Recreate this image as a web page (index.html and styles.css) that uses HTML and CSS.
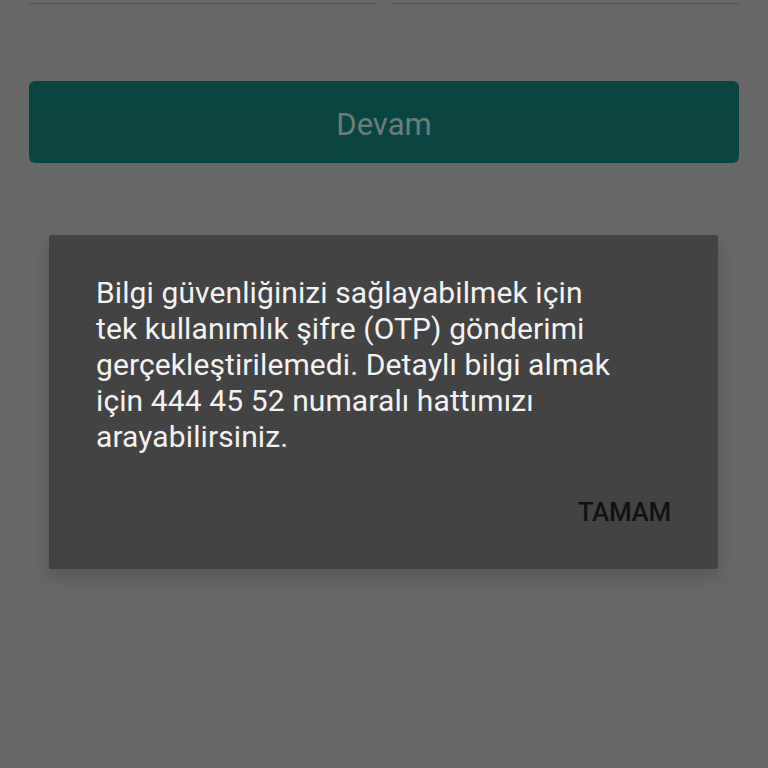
FILE: index.html
```html
<!DOCTYPE html>
<html lang="tr">
<head>
<meta charset="utf-8">
<link rel="stylesheet" href="styles.css">
</head>
<body>
<div class="screen">
  <div class="inputs">
    <div class="field"></div>
    <div class="field"></div>
  </div>
  <div class="btn">Devam</div>
  <div class="dialog">
    <p class="msg">Bilgi güvenliğinizi sağlayabilmek için<br>tek kullanımlık şifre (OTP) gönderimi<br>gerçekleştirilemedi. Detaylı bilgi almak<br>için 444 45 52 numaralı hattımızı<br>arayabilirsiniz.</p>
    <div class="actions"><span class="ok">TAMAM</span></div>
  </div>
</div>
</body>
</html>
```
FILE: styles.css
```css
html, body {
  margin: 0;
  padding: 0;
  background: #686868;
}
.screen {
  width: 768px;
  height: 768px;
  overflow: hidden;
  font-family: Roboto, "Noto Sans", sans-serif;
}
.inputs {
  display: flex;
  gap: 16px;
  padding: 0 28px 0 28px;
}
.field {
  flex: 1;
  height: 3px;
  border-bottom: 1px solid #555;
}
.btn {
  margin: 77px 29px 0 29px;
  height: 82px;
  background: #0b4542;
  border-radius: 6px;
  color: #6b7c7a;
  font-size: 31px;
  line-height: 1;
  padding-top: 5px;
  box-sizing: border-box;
  display: flex;
  align-items: center;
  justify-content: center;
}
.dialog {
  margin: 72px 50px 0 49px;
  height: 334px;
  background: #434343;
  border-radius: 2px;
  box-shadow: 0 8px 16px rgba(0,0,0,0.18);
  padding: 0 47px 0 47px;
  box-sizing: border-box;
  display: flex;
  flex-direction: column;
}
.msg {
  margin: 40px 0 0 0;
  color: #f2f2f2;
  font-size: 30px;
  line-height: 36px;
  letter-spacing: 0.1px;
}
.actions {
  display: flex;
  justify-content: flex-end;
  margin-top: 42px;
}
.ok {
  color: #111;
  font-size: 26px;
  font-weight: 500;
  letter-spacing: -0.3px;
}
```
